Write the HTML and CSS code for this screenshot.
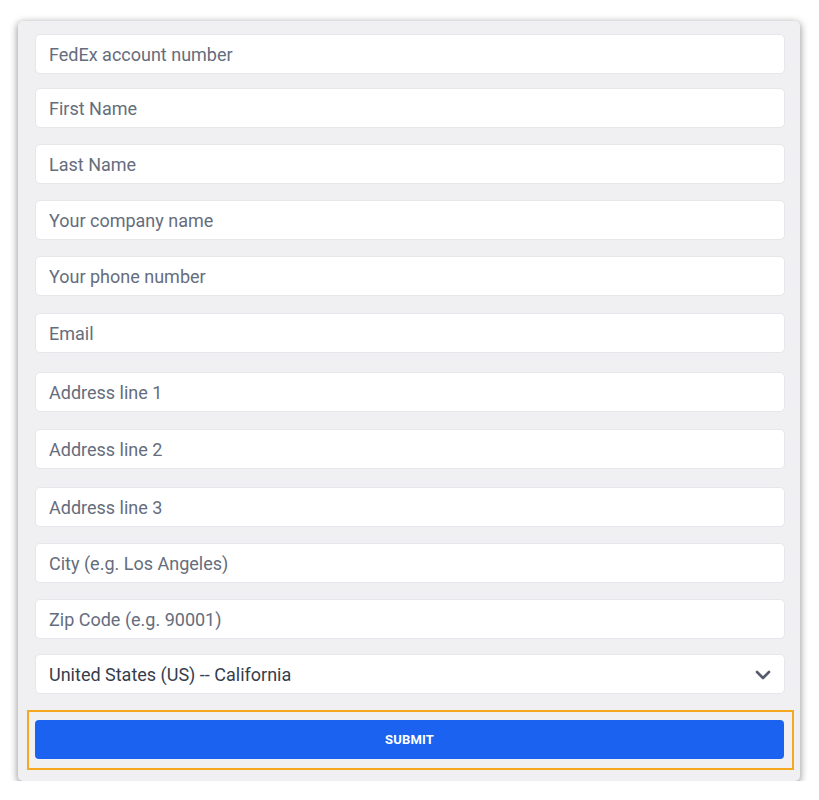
FILE: index.html
```html
<!DOCTYPE html>
<html lang="en">
<head>
<meta charset="utf-8">
<title>FedEx account form</title>
<link rel="stylesheet" href="styles.css">
</head>
<body>
<div class="panel">
  <form class="form">
    <input class="field" type="text" placeholder="FedEx account number">
    <input class="field" type="text" placeholder="First Name">
    <input class="field" type="text" placeholder="Last Name">
    <input class="field" type="text" placeholder="Your company name">
    <input class="field" type="text" placeholder="Your phone number">
    <input class="field" type="text" placeholder="Email">
    <input class="field" type="text" placeholder="Address line 1">
    <input class="field" type="text" placeholder="Address line 2">
    <input class="field" type="text" placeholder="Address line 3">
    <input class="field" type="text" placeholder="City (e.g. Los Angeles)">
    <input class="field" type="text" placeholder="Zip Code (e.g. 90001)">
    <div class="field select-wrap">
      <select class="select">
        <option>United States (US) -- California</option>
      </select>
      <svg class="chevron" width="16" height="10" viewBox="0 0 16 10"><path d="M2 2l6 6 6-6" fill="none" stroke="#555b6b" stroke-width="2.6" stroke-linecap="round" stroke-linejoin="round"/></svg>
    </div>
    <div class="highlight">
      <button class="submit" type="button">SUBMIT</button>
    </div>
  </form>
</div>
</body>
</html>
```
FILE: styles.css
```css
html, body {
  margin: 0;
  padding: 0;
  background: #ffffff;
}
body {
  font-family: Roboto, "Liberation Sans", Arial, sans-serif;
  padding: 21px 19px 0 18px;
}
.panel {
  width: 782px;
  height: 760px;
  box-sizing: border-box;
  background: #f0f0f2;
  border-radius: 5px;
  box-shadow: 0 2px 7px 1px rgba(0, 0, 0, 0.38);
  padding: 13px 15px 10px 17px;
}
.form {
  display: flex;
  flex-direction: column;
  margin: 0;
}
.field {
  display: block;
  box-sizing: border-box;
  width: 750px;
  height: 40px;
  margin: 16px 0 0 0;
  padding: 0 13px;
  background: #ffffff;
  border: 1px solid #e6e7ea;
  border-radius: 5px;
  font-family: Roboto, "Liberation Sans", Arial, sans-serif;
  font-size: 18px;
  color: #3c4352;
  outline: none;
}
.field::placeholder {
  color: #656d7d;
  opacity: 1;
}
.field:first-child { margin-top: 0; }
.field:nth-child(2) { margin-top: 14px; }
.field:nth-child(6) { margin-top: 17px; }
.field:nth-child(7) { margin-top: 19px; }
.field:nth-child(8) { margin-top: 17px; }
.field:nth-child(9) { margin-top: 18px; }
.field:nth-child(12) { margin-top: 15px; }
.select-wrap {
  position: relative;
  padding: 0;
}
.select {
  appearance: none;
  -webkit-appearance: none;
  width: 100%;
  height: 100%;
  border: none;
  background: transparent;
  padding: 0 13px;
  font-family: Roboto, "Liberation Sans", Arial, sans-serif;
  font-size: 18px;
  color: #363d4c;
  outline: none;
}
.chevron {
  position: absolute;
  right: 13px;
  top: 15px;
  pointer-events: none;
}
.highlight {
  margin: 16px -9px 0 -8px;
  border: 2px solid #f7a823;
  padding: 8px 8px 9px 6px;
}
.submit {
  display: block;
  width: 100%;
  height: 39px;
  border: none;
  border-radius: 4px;
  background: #1b62f0;
  color: #ffffff;
  font-family: Roboto, "Liberation Sans", Arial, sans-serif;
  font-size: 13px;
  font-weight: 700;
  letter-spacing: 0.2px;
}
```
